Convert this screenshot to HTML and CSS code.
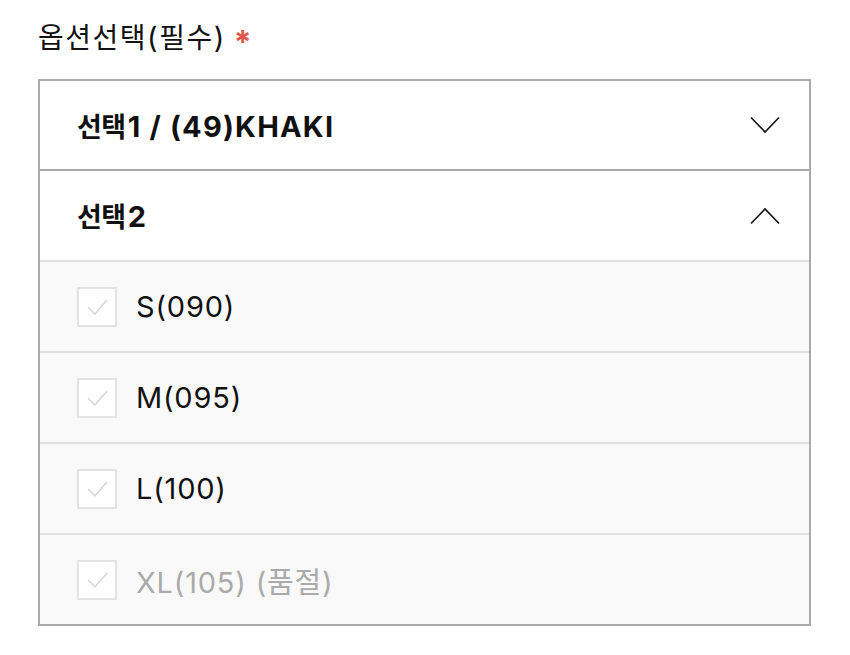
FILE: index.html
```html
<!DOCTYPE html>
<html lang="ko">

<head>
    <meta charset="UTF-8">
    <meta name="viewport" content="width=device-width, initial-scale=1.0">
    <title>옵션선택</title>
    <link rel="stylesheet" href="styles.css">
</head>

<body>
    <div class="option-wrap">
        <div class="option-title">옵션선택<span class="latin">(</span>필수<span class="latin">)</span><span class="required">*</span></div>
        <div class="option-box">
            <div class="select-head">
                <span class="select-label"><span class="ko">선택</span>1 / (49)KHAKI</span>
                <svg class="chevron" width="30" height="18" viewBox="0 0 30 18">
                    <polyline points="1,1.5 15,16 29,1.5" fill="none" stroke="#111" stroke-width="1.6" />
                </svg>
            </div>
            <div class="select-head open">
                <span class="select-label"><span class="ko">선택</span>2</span>
                <svg class="chevron" width="30" height="18" viewBox="0 0 30 18">
                    <polyline points="1,16.5 15,2 29,16.5" fill="none" stroke="#111" stroke-width="1.6" />
                </svg>
            </div>
            <ul class="option-list">
                <li class="option-item">
                    <span class="check">
                        <svg width="40" height="40" viewBox="0 0 40 40">
                            <polyline points="11,20 18,27 30,13" fill="none" stroke="#d4d4d4" stroke-width="1.4" />
                        </svg>
                    </span>
                    <span class="option-name">S(090)</span>
                </li>
                <li class="option-item">
                    <span class="check">
                        <svg width="40" height="40" viewBox="0 0 40 40">
                            <polyline points="11,20 18,27 30,13" fill="none" stroke="#d4d4d4" stroke-width="1.4" />
                        </svg>
                    </span>
                    <span class="option-name">M(095)</span>
                </li>
                <li class="option-item">
                    <span class="check">
                        <svg width="40" height="40" viewBox="0 0 40 40">
                            <polyline points="11,20 18,27 30,13" fill="none" stroke="#d4d4d4" stroke-width="1.4" />
                        </svg>
                    </span>
                    <span class="option-name">L(100)</span>
                </li>
                <li class="option-item soldout">
                    <span class="check">
                        <svg width="40" height="40" viewBox="0 0 40 40">
                            <polyline points="11,20 18,27 30,13" fill="none" stroke="#d4d4d4" stroke-width="1.4" />
                        </svg>
                    </span>
                    <span class="option-name">XL(105) <span class="latin">(</span>품절<span class="latin">)</span></span>
                </li>
            </ul>
        </div>
    </div>
</body>

</html>
```

FILE: styles.css
```css
body {
    margin: 0;
    background-color: white;
    color: #111;
    font-family: "Inter", "Noto Sans CJK KR", sans-serif;
}

.option-wrap {
    padding: 20px 39px 0 38px;
}

.option-title {
    height: 36px;
    font-size: 28px;
    line-height: 36px;
    margin-bottom: 23px;
    white-space: nowrap;
    letter-spacing: 1.5px;
}

.option-title .latin {
    font-size: 29px;
}

.required {
    display: inline-block;
    margin-left: 8px;
    color: #e0564a;
    font-size: 32px;
    font-weight: bold;
    line-height: 0;
    vertical-align: -6px;
}

.option-box {
    border: 2px solid #a9a9a9;
}

.select-head {
    display: flex;
    justify-content: space-between;
    align-items: center;
    height: 88px;
    padding: 0 29px 0 37px;
    border-bottom: 2px solid #a9a9a9;
    background-color: white;
}

.select-head.open {
    height: 89px;
    border-bottom: 2px solid #dedede;
}

.select-label {
    font-size: 29px;
    font-weight: 700;
    letter-spacing: 1.2px;
}

.ko {
    font-size: 27px;
    letter-spacing: -0.5px;
    margin-right: 2px;
}

.option-list {
    list-style: none;
    margin: 0;
    padding: 0;
    background-color: #f9f9f9;
}

.option-item {
    display: flex;
    align-items: center;
    gap: 19px;
    height: 89px;
    padding-left: 37px;
    border-bottom: 2px solid #e0e0e0;
}

.option-item:last-child {
    border-bottom: none;
}

.check {
    display: block;
    flex-shrink: 0;
    width: 40px;
    height: 40px;
    box-sizing: border-box;
    border: 2px solid #e3e3e3;
    background-color: white;
}

.check svg {
    display: block;
    margin: -2px;
}

.option-name {
    font-size: 29px;
    letter-spacing: 0.8px;
}

.soldout .option-name {
    color: #aaa;
}
```
